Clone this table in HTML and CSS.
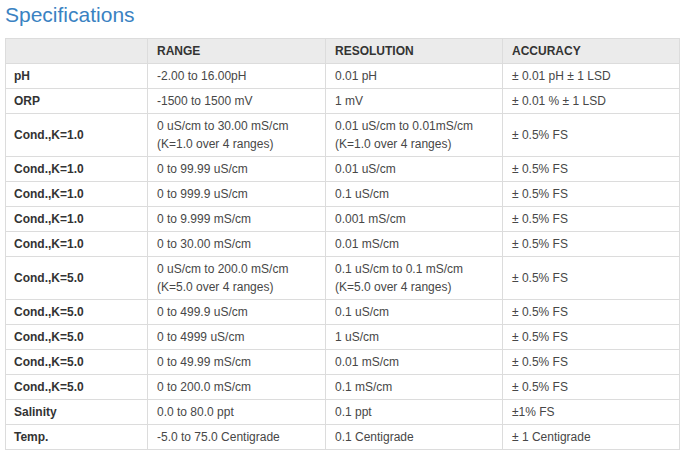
FILE: index.html
```html
<!DOCTYPE html>
<html>
<head>
<meta charset="utf-8">
<link rel="stylesheet" href="styles.css">
</head>
<body>
<h2 class="title">Specifications</h2>
<table class="spec">
  <colgroup>
    <col class="c1"><col class="c2"><col class="c3"><col class="c4">
  </colgroup>
  <thead>
    <tr><th></th><th>RANGE</th><th>RESOLUTION</th><th>ACCURACY</th></tr>
  </thead>
  <tbody>
    <tr><td class="name">pH</td><td>-2.00 to 16.00pH</td><td>0.01 pH</td><td>± 0.01 pH ± 1 LSD</td></tr>
    <tr><td class="name">ORP</td><td>-1500 to 1500 mV</td><td>1 mV</td><td>± 0.01 % ± 1 LSD</td></tr>
    <tr><td class="name">Cond.,K=1.0</td><td>0 uS/cm to 30.00 mS/cm<br>(K=1.0 over 4 ranges)</td><td>0.01 uS/cm to 0.01mS/cm<br>(K=1.0 over 4 ranges)</td><td>± 0.5% FS</td></tr>
    <tr><td class="name">Cond.,K=1.0</td><td>0 to 99.99 uS/cm</td><td>0.01 uS/cm</td><td>± 0.5% FS</td></tr>
    <tr><td class="name">Cond.,K=1.0</td><td>0 to 999.9 uS/cm</td><td>0.1 uS/cm</td><td>± 0.5% FS</td></tr>
    <tr><td class="name">Cond.,K=1.0</td><td>0 to 9.999 mS/cm</td><td>0.001 mS/cm</td><td>± 0.5% FS</td></tr>
    <tr><td class="name">Cond.,K=1.0</td><td>0 to 30.00 mS/cm</td><td>0.01 mS/cm</td><td>± 0.5% FS</td></tr>
    <tr><td class="name">Cond.,K=5.0</td><td>0 uS/cm to 200.0 mS/cm<br>(K=5.0 over 4 ranges)</td><td>0.1 uS/cm to 0.1 mS/cm<br>(K=5.0 over 4 ranges)</td><td>± 0.5% FS</td></tr>
    <tr><td class="name">Cond.,K=5.0</td><td>0 to 499.9 uS/cm</td><td>0.1 uS/cm</td><td>± 0.5% FS</td></tr>
    <tr><td class="name">Cond.,K=5.0</td><td>0 to 4999 uS/cm</td><td>1 uS/cm</td><td>± 0.5% FS</td></tr>
    <tr><td class="name">Cond.,K=5.0</td><td>0 to 49.99 mS/cm</td><td>0.01 mS/cm</td><td>± 0.5% FS</td></tr>
    <tr><td class="name">Cond.,K=5.0</td><td>0 to 200.0 mS/cm</td><td>0.1 mS/cm</td><td>± 0.5% FS</td></tr>
    <tr><td class="name">Salinity</td><td>0.0 to 80.0 ppt</td><td>0.1 ppt</td><td>±1% FS</td></tr>
    <tr><td class="name">Temp.</td><td>-5.0 to 75.0 Centigrade</td><td>0.1 Centigrade</td><td>± 1 Centigrade</td></tr>
  </tbody>
</table>
</body>
</html>
```
FILE: styles.css
```css
html, body {
  margin: 0;
  padding: 0;
  background: #ffffff;
}
body {
  font-family: "Liberation Sans", Arial, sans-serif;
  padding: 0 4px 0 5px;
}
.title {
  margin: 0;
  padding: 2px 0 0 0;
  height: 36px;
  box-sizing: border-box;
  font-size: 21px;
  font-weight: normal;
  line-height: 26px;
  color: #3a82c2;
}
.spec {
  width: 674px;
  border-collapse: collapse;
  table-layout: fixed;
  font-size: 12px;
  color: #474747;
  margin-top: 2px;
}
.c1 { width: 142px; }
.c2 { width: 178px; }
.c3 { width: 177px; }
.c4 { width: 177px; }
.spec th, .spec td {
  border: 1px solid #dcdcdc;
  padding: 3px 9px 3px 9px;
  line-height: 18px;
  text-align: left;
  vertical-align: middle;
}
.spec th:first-child, .spec td.name {
  padding-left: 8px;
}
.spec th {
  background: #ebebeb;
  color: #333333;
  font-weight: bold;
}
.spec td.name {
  font-weight: bold;
  color: #333333;
}
```
